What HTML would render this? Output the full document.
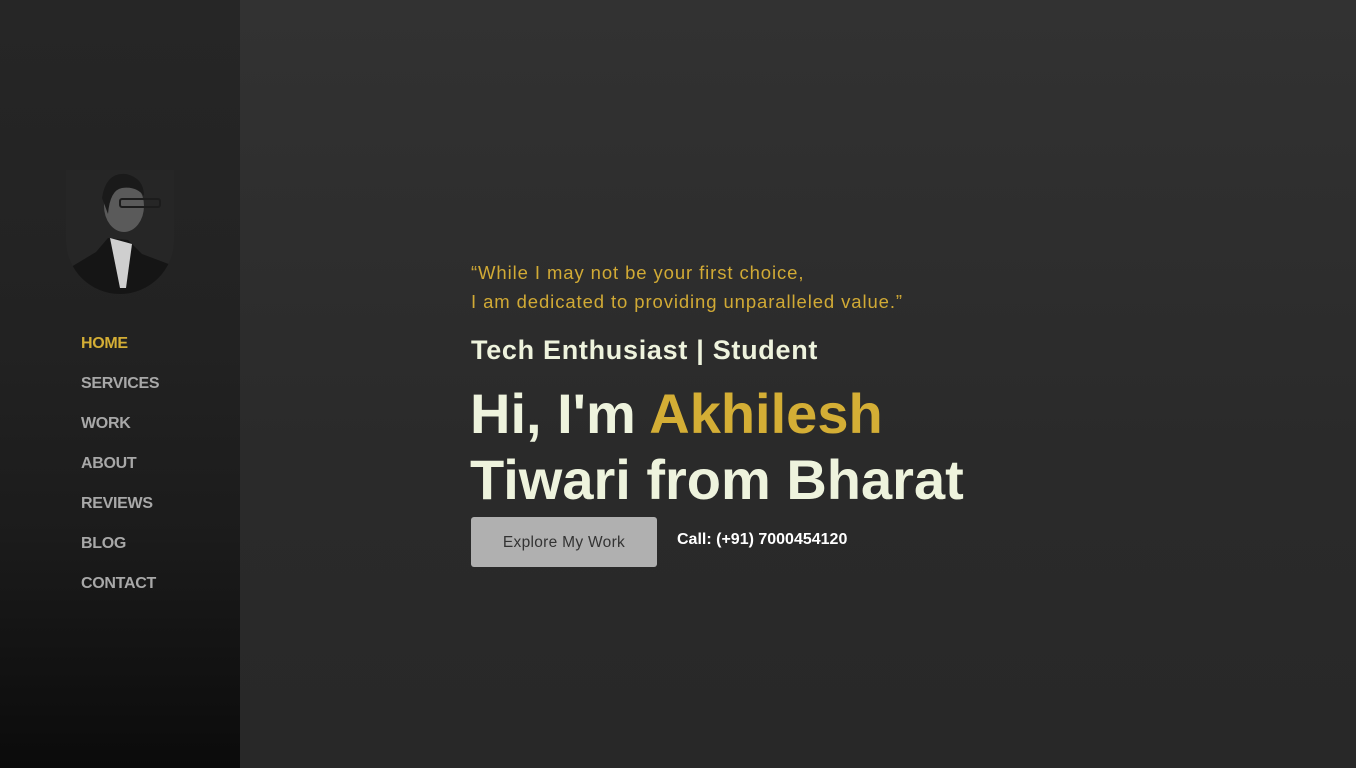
<!DOCTYPE html>
<html><head><meta charset="utf-8"><style>
*{margin:0;padding:0;box-sizing:border-box}
body{width:1356px;height:768px;overflow:hidden;font-family:"Liberation Sans",sans-serif;background:linear-gradient(180deg,#323232 0%,#2a2a2a 60%,#282828 100%);position:relative}
.side{position:absolute;left:0;top:0;width:240px;height:768px;background:linear-gradient(180deg,#262626 0%,#222 45%,#1b1b1b 70%,#0b0b0b 100%)}
.av{position:absolute;left:66px;top:170px;width:108px;height:124px;overflow:hidden;border-radius:0 0 54px 54px}
nav a{position:absolute;left:81px;font-size:16px;font-weight:bold;color:#a8a8a8;text-decoration:none;letter-spacing:-0.3px}
.q{position:absolute;left:471px;color:#d1aa35;font-size:18.5px;letter-spacing:0.9px}
.t{position:absolute;left:471px;top:335px;color:#eef3dd;font-size:27px;font-weight:bold;letter-spacing:0.7px}
.h{position:absolute;left:470px;color:#eef3dd;font-size:56px;font-weight:bold;letter-spacing:0;line-height:1}
.h span{color:#d4ae35}
.btn{position:absolute;left:471px;top:517px;width:186px;height:50px;background:#b0b0b0;border-radius:3px;color:#333;font-size:15.5px;text-align:center;line-height:51px;letter-spacing:0.3px}
.call{position:absolute;left:677px;top:531px;color:#fff;font-size:16px;font-weight:bold;letter-spacing:0}
</style></head><body>
<div class="side">
<div class="av"><svg width="108" height="124" viewBox="0 0 108 124">
<rect width="108" height="124" fill="#262626"/>
<path d="M0 100 L30 82 L42 68 L62 70 L76 84 L108 96 L108 124 L0 124Z" fill="#151515"/>
<path d="M44 68 L54 118 L60 118 L66 74Z" fill="#cfcfcf"/>
<ellipse cx="58" cy="36" rx="20" ry="26" fill="#5a5a5a"/>
<path d="M36 28 Q40 2 60 4 Q78 8 78 26 Q70 16 56 18 Q44 20 42 44Z" fill="#1a1a1a"/>
<rect x="54" y="29" width="40" height="8" rx="2" fill="none" stroke="#1c1c1c" stroke-width="2"/>
</svg></div>
<nav>
<a style="top:335px;color:#d4ae35">HOME</a>
<a style="top:375px">SERVICES</a>
<a style="top:415px">WORK</a>
<a style="top:455px">ABOUT</a>
<a style="top:495px">REVIEWS</a>
<a style="top:535px">BLOG</a>
<a style="top:575px">CONTACT</a>
</nav>
</div>
<div class="q" style="top:262px">“While I may not be your first choice,</div>
<div class="q" style="top:291px">I am dedicated to providing unparalleled value.”</div>
<div class="t">Tech Enthusiast | Student</div>
<div class="h" style="top:386px">Hi, I'm <span>Akhilesh</span></div>
<div class="h" style="top:452px">Tiwari from Bharat</div>
<div class="btn">Explore My Work</div>
<div class="call">Call: (+91) 7000454120</div>
</body></html>
